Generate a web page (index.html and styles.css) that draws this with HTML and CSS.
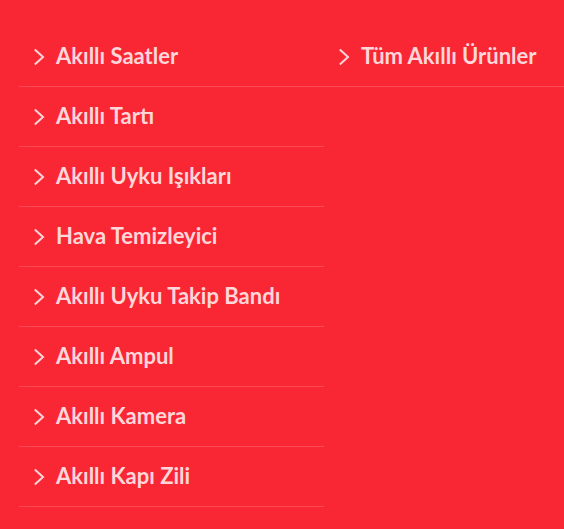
FILE: index.html
```html
<!DOCTYPE html>
<html lang="tr">
<head>
<meta charset="utf-8">
<link rel="stylesheet" href="styles.css">
</head>
<body>
<div class="menu">
  <ul class="col col-left">
    <li><a class="item"><svg class="chev" viewBox="0 0 12 20"><path d="M1.8 2.5 L10 10 L1.8 17.5"/></svg><span>Akıllı Saatler</span></a></li>
    <li><a class="item"><svg class="chev" viewBox="0 0 12 20"><path d="M1.8 2.5 L10 10 L1.8 17.5"/></svg><span>Akıllı Tartı</span></a></li>
    <li><a class="item"><svg class="chev" viewBox="0 0 12 20"><path d="M1.8 2.5 L10 10 L1.8 17.5"/></svg><span>Akıllı Uyku Işıkları</span></a></li>
    <li><a class="item"><svg class="chev" viewBox="0 0 12 20"><path d="M1.8 2.5 L10 10 L1.8 17.5"/></svg><span>Hava Temizleyici</span></a></li>
    <li><a class="item"><svg class="chev" viewBox="0 0 12 20"><path d="M1.8 2.5 L10 10 L1.8 17.5"/></svg><span>Akıllı Uyku Takip Bandı</span></a></li>
    <li><a class="item"><svg class="chev" viewBox="0 0 12 20"><path d="M1.8 2.5 L10 10 L1.8 17.5"/></svg><span>Akıllı Ampul</span></a></li>
    <li><a class="item"><svg class="chev" viewBox="0 0 12 20"><path d="M1.8 2.5 L10 10 L1.8 17.5"/></svg><span>Akıllı Kamera</span></a></li>
    <li><a class="item"><svg class="chev" viewBox="0 0 12 20"><path d="M1.8 2.5 L10 10 L1.8 17.5"/></svg><span>Akıllı Kapı Zili</span></a></li>
  </ul>
  <ul class="col col-right">
    <li><a class="item"><svg class="chev" viewBox="0 0 12 20"><path d="M1.8 2.5 L10 10 L1.8 17.5"/></svg><span>Tüm Akıllı Ürünler</span></a></li>
  </ul>
</div>
</body>
</html>
```
FILE: styles.css
```css
html, body {
  margin: 0;
  padding: 0;
  background: #f92733;
  height: 100%;
  overflow: hidden;
}
.menu {
  display: flex;
  padding: 27px 0 0 19px;
  font-family: "Lato", "Noto Sans", sans-serif;
}
.col {
  list-style: none;
  margin: 0;
  padding: 0;
}
.col-left {
  width: 305px;
  flex: none;
}
.col-right {
  flex: 1;
}
.col li {
  border-bottom: 1px solid rgba(255, 255, 255, 0.16);
}
.item {
  display: flex;
  align-items: center;
  height: 59px;
  padding-left: 14px;
  color: #ffd6da;
  font-size: 22px;
  font-weight: 700;
  text-decoration: none;
}
.item span {
  position: relative;
  top: -1px;
}
.chev {
  width: 12px;
  height: 20px;
  margin-right: 11px;
  flex: none;
  fill: none;
  stroke: #ffd6da;
  stroke-width: 2;
}
```
